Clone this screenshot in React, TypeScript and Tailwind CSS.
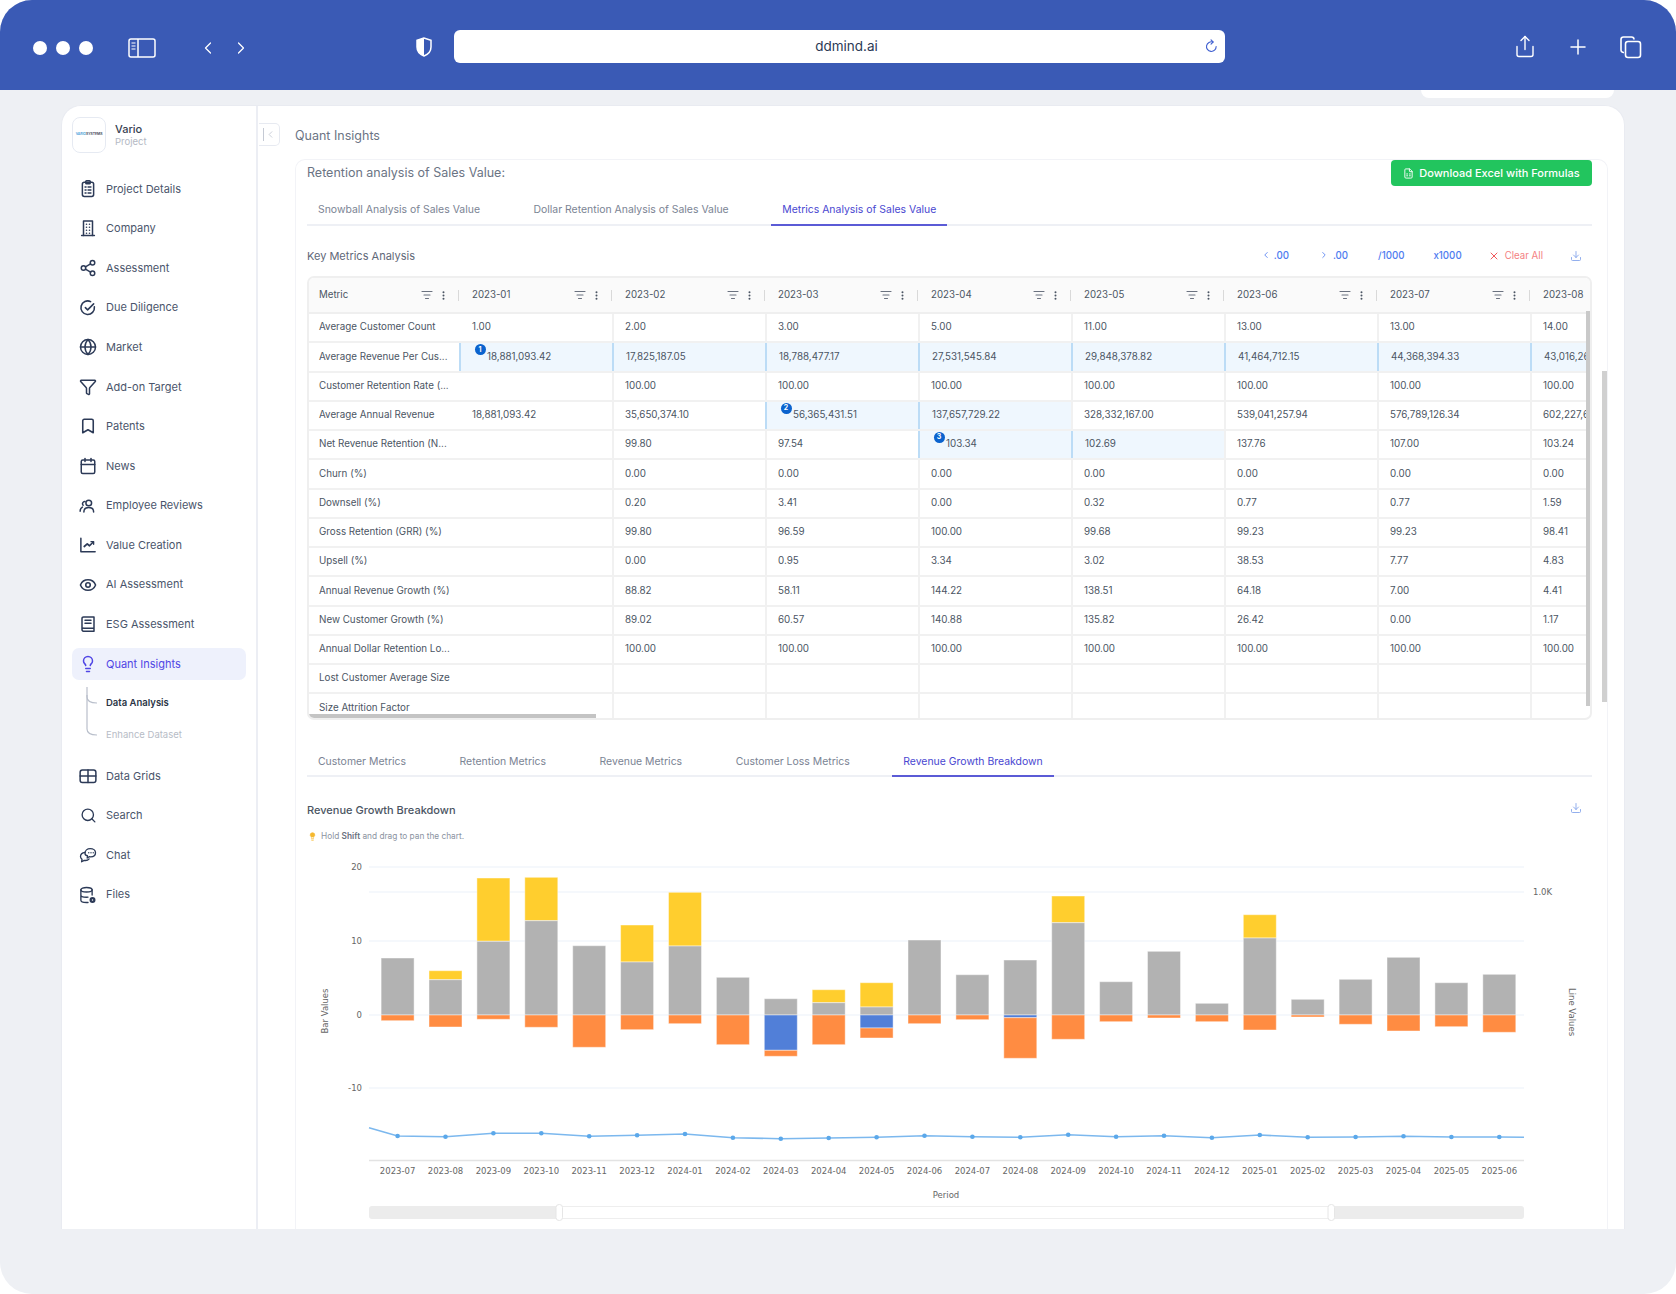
import React from 'react';
import {
  Bookmark,
  Calendar,
  ChevronLeft,
  ChevronRight,
  Download,
  EllipsisVertical,
  Eye,
  FileSpreadsheet,
  Funnel,
  Globe,
  Lightbulb,
  ListFilter,
  Plus,
  Search,
  Share,
  Share2,
  X,
} from 'lucide-react';

const ClipIcon = ({ className }: { className?: string }) => (
  <svg viewBox="0 0 24 24" fill="none" stroke="currentColor" strokeWidth="2" strokeLinecap="round" strokeLinejoin="round" className={className}>
    <rect x="4.500" y="3.500" width="15" height="19" rx="2.500" />
    <rect x="9" y="1.500" width="6" height="4" rx="1" />
    <path d="M8 10h1.500M12 10h4M8 14h1.500M12 14h4M8 18h1.500M12 18h4" strokeWidth="1.700" />
  </svg>
);

const CompanyIcon = ({ className }: { className?: string }) => (
  <svg viewBox="0 0 24 24" fill="none" stroke="currentColor" strokeWidth="2" strokeLinecap="round" strokeLinejoin="round" className={className}>
    <path d="M6 22V2.500h12V22" />
    <path d="M3.500 22h17" />
    <path d="M10 7h.01M14 7h.01M10 11h.01M14 11h.01M10 15h.01M14 15h.01M10 19h.01M14 19h.01" strokeWidth="2.200" />
  </svg>
);

const DueIcon = ({ className }: { className?: string }) => (
  <svg viewBox="0 0 24 24" fill="none" stroke="currentColor" strokeWidth="2.100" strokeLinecap="round" strokeLinejoin="round" className={className}>
    <path d="M20.500 10.500a9 9 0 1 1-5-7" />
    <path d="M8.500 11.500l3 3 8-8" />
  </svg>
);

const PeopleIcon = ({ className }: { className?: string }) => (
  <svg viewBox="0 0 24 24" fill="none" stroke="currentColor" strokeWidth="2" strokeLinecap="round" strokeLinejoin="round" className={className}>
    <circle cx="13" cy="8" r="3.800" />
    <path d="M6.500 20c0-3.800 2.800-6 6.500-6s6.500 2.200 6.500 6" />
    <path d="M8 6a3 3 0 0 0-2.500 5M4.500 13.500C2.800 14.500 1.500 16.500 1.500 19" />
  </svg>
);

const ValueIcon = ({ className }: { className?: string }) => (
  <svg viewBox="0 0 24 24" fill="none" stroke="currentColor" strokeWidth="2" strokeLinecap="round" strokeLinejoin="round" className={className}>
    <path d="M2.500 3v18h19" />
    <path d="M7 14l4-3.500 3 2.500 5-5" strokeWidth="2.300" />
    <path d="M16 7.500h3.500V11" strokeWidth="1.800" />
  </svg>
);

const BookIcon = ({ className }: { className?: string }) => (
  <svg viewBox="0 0 24 24" fill="none" stroke="currentColor" strokeWidth="2" strokeLinecap="round" strokeLinejoin="round" className={className}>
    <path d="M4 19V4.500A2 2 0 0 1 6 2.500h14v19H6a2 2 0 0 1-2-2.500 2 2 0 0 1 2-1.500h14" />
    <path d="M8 7h8M8 11h8" />
  </svg>
);

const GridsIcon = ({ className }: { className?: string }) => (
  <svg viewBox="0 0 24 24" fill="none" stroke="currentColor" strokeWidth="2" strokeLinecap="round" strokeLinejoin="round" className={className}>
    <rect x="1.500" y="4" width="21" height="16.500" rx="3" />
    <path d="M12 4v16.500M1.500 12h21" />
  </svg>
);

const ChatIcon = ({ className }: { className?: string }) => (
  <svg viewBox="0 0 24 24" fill="none" stroke="currentColor" strokeWidth="1.800" strokeLinecap="round" strokeLinejoin="round" className={className}>
    <path d="M8 9.500C8 6 11 3.500 15 3.500s7 2.500 7 5.500-2.500 5.500-6.500 5.500c-.8 0-1.500-.1-2-.2L11 16l.2-3C9 12.500 8 11 8 9.500z" />
    <path d="M8 8.500C4.500 9 2 11.500 2 14c0 1.500.8 2.800 2 3.700L3.500 21l3.500-1.800c2.500.5 5-.2 6.500-2" />
    <path d="M13 9h.01M16 9h.01M19 9h.01" />
  </svg>
);

const FilesIcon = ({ className }: { className?: string }) => (
  <svg viewBox="0 0 24 24" fill="none" stroke="currentColor" strokeWidth="1.800" strokeLinecap="round" strokeLinejoin="round" className={className}>
    <ellipse cx="10" cy="5" rx="7.500" ry="3" />
    <path d="M2.500 5v14c0 1.700 3.300 3 7.500 3h2M17.500 5v7M2.500 12c0 1.700 3.300 3 7.500 3 .7 0 1.300 0 2-.1" />
    <circle cx="18" cy="18.500" r="2.500" strokeWidth="3" />
  </svg>
);

const SidebarIcon = () => (
  <svg viewBox="0 0 28 20" className="w-[28px] h-[20px]" fill="none" stroke="white" strokeWidth="1.500">
    <rect x="1" y="1" width="26" height="18" rx="2" />
    <path d="M10 1v18" />
    <path d="M3.500 5h4M3.500 8h4M3.500 11h4" strokeWidth="1.200" />
  </svg>
);

const ShieldIcon = () => (
  <svg viewBox="0 0 16 20" className="w-[16px] h-[20px]">
    <path d="M8 1 1 3.200V10c0 4.500 3.200 7.500 7 9 3.800-1.500 7-4.500 7-9V3.200z" fill="none" stroke="white" strokeWidth="1.500" />
    <path d="M8 1 1 3.200V10c0 4.500 3.200 7.500 7 9z" fill="white" />
  </svg>
);

const ReloadIcon = () => (
  <svg viewBox="0 0 14 16" className="w-[13px] h-[15px]" fill="none" stroke="#3f5fd0" strokeWidth="1.200" strokeLinecap="round">
    <path d="M8.500 3.200A5.200 5.200 0 1 0 12 8" />
    <path d="M6.500 .8l2.300 2.300-2.300 2.300" />
  </svg>
);

const CopyIcon = () => (
  <svg viewBox="0 0 24 24" className="w-[24px] h-[24px]" fill="none" stroke="white" strokeWidth="1.600">
    <path d="M5 17.500A2.500 2.500 0 0 1 2 15V4.500A2.500 2.500 0 0 1 4.500 2h8A2.500 2.500 0 0 1 15 4.500" />
    <rect x="6.500" y="6.500" width="15" height="16" rx="2.500" />
  </svg>
);

const navTop = [
  { label: 'Project Details', icon: <ClipIcon className="w-[19px] h-[19px]" /> },
  { label: 'Company', icon: <CompanyIcon className="w-[18px] h-[18px]" /> },
  { label: 'Assessment', icon: <Share2 className="w-[18px] h-[18px]" strokeWidth={2} /> },
  { label: 'Due Diligence', icon: <DueIcon className="w-[18px] h-[18px]" /> },
  { label: 'Market', icon: <Globe className="w-[18px] h-[18px]" strokeWidth={2} /> },
  { label: 'Add-on Target', icon: <Funnel className="w-[18px] h-[18px]" strokeWidth={2} /> },
  { label: 'Patents', icon: <Bookmark className="w-[18px] h-[18px]" strokeWidth={2.1} /> },
  { label: 'News', icon: <Calendar className="w-[18px] h-[18px]" strokeWidth={2} /> },
  { label: 'Employee Reviews', icon: <PeopleIcon className="w-[18px] h-[18px]" /> },
  { label: 'Value Creation', icon: <ValueIcon className="w-[18px] h-[18px]" /> },
  { label: 'AI Assessment', icon: <Eye className="w-[18px] h-[18px]" strokeWidth={2.1} /> },
  { label: 'ESG Assessment', icon: <BookIcon className="w-[18px] h-[18px]" /> },
];

const navBottom = [
  { label: 'Data Grids', icon: <GridsIcon className="w-[18px] h-[18px]" /> },
  { label: 'Search', icon: <Search className="w-[17px] h-[17px]" strokeWidth={1.9} /> },
  { label: 'Chat', icon: <ChatIcon className="w-[18px] h-[18px]" /> },
  { label: 'Files', icon: <FilesIcon className="w-[18px] h-[18px]" /> },
];

const months = ['2023-01', '2023-02', '2023-03', '2023-04', '2023-05', '2023-06', '2023-07', '2023-08'];

const rows: { name: string; values: string[]; hl?: number[]; badge?: [number, number] }[] = [
  { name: 'Average Customer Count', values: ['1.00', '2.00', '3.00', '5.00', '11.00', '13.00', '13.00', '14.00'] },
  { name: 'Average Revenue Per Cus...', values: ['18,881,093.42', '17,825,187.05', '18,788,477.17', '27,531,545.84', '29,848,378.82', '41,464,712.15', '44,368,394.33', '43,016,261.50'], hl: [0, 1, 2, 3, 4, 5, 6, 7], badge: [0, 1] },
  { name: 'Customer Retention Rate (...', values: ['', '100.00', '100.00', '100.00', '100.00', '100.00', '100.00', '100.00'] },
  { name: 'Average Annual Revenue', values: ['18,881,093.42', '35,650,374.10', '56,365,431.51', '137,657,729.22', '328,332,167.00', '539,041,257.94', '576,789,126.34', '602,227,600.12'], hl: [2, 3], badge: [2, 2] },
  { name: 'Net Revenue Retention (N...', values: ['', '99.80', '97.54', '103.34', '102.69', '137.76', '107.00', '103.24'], hl: [3, 4], badge: [3, 3] },
  { name: 'Churn (%)', values: ['', '0.00', '0.00', '0.00', '0.00', '0.00', '0.00', '0.00'] },
  { name: 'Downsell (%)', values: ['', '0.20', '3.41', '0.00', '0.32', '0.77', '0.77', '1.59'] },
  { name: 'Gross Retention (GRR) (%)', values: ['', '99.80', '96.59', '100.00', '99.68', '99.23', '99.23', '98.41'] },
  { name: 'Upsell (%)', values: ['', '0.00', '0.95', '3.34', '3.02', '38.53', '7.77', '4.83'] },
  { name: 'Annual Revenue Growth (%)', values: ['', '88.82', '58.11', '144.22', '138.51', '64.18', '7.00', '4.41'] },
  { name: 'New Customer Growth (%)', values: ['', '89.02', '60.57', '140.88', '135.82', '26.42', '0.00', '1.17'] },
  { name: 'Annual Dollar Retention Lo...', values: ['', '100.00', '100.00', '100.00', '100.00', '100.00', '100.00', '100.00'] },
  { name: 'Lost Customer Average Size', values: ['', '', '', '', '', '', '', ''] },
  { name: 'Size Attrition Factor', values: ['', '', '', '', '', '', '', ''] },
];

// bar heights in px from the zero line: gray, yellow top, blue depth, orange depth
const bars = [
  { m: '2023-07', g: 57, y: 57, b: 0, o: 5.7 },
  { m: '2023-08', g: 35.3, y: 44.3, b: 0, o: 12 },
  { m: '2023-09', g: 73.7, y: 137, b: 0, o: 4.3 },
  { m: '2023-10', g: 94.3, y: 137.7, b: 0, o: 12.3 },
  { m: '2023-11', g: 69.3, y: 69.3, b: 0, o: 32.3 },
  { m: '2023-12', g: 53, y: 90, b: 0, o: 14.7 },
  { m: '2024-01', g: 69, y: 122.7, b: 0, o: 8.7 },
  { m: '2024-02', g: 37.7, y: 37.7, b: 0, o: 29.7 },
  { m: '2024-03', g: 16.3, y: 16.3, b: 35.3, o: 41.3 },
  { m: '2024-04', g: 12.3, y: 25.3, b: 0, o: 29.7 },
  { m: '2024-05', g: 8, y: 32.3, b: 13, o: 23 },
  { m: '2024-06', g: 75, y: 75, b: 0, o: 8.7 },
  { m: '2024-07', g: 40.3, y: 40.3, b: 0, o: 4.7 },
  { m: '2024-08', g: 55, y: 55, b: 2.7, o: 43.3 },
  { m: '2024-09', g: 92.3, y: 119, b: 0, o: 24.3 },
  { m: '2024-10', g: 33.3, y: 33.3, b: 0, o: 6.7 },
  { m: '2024-11', g: 63.7, y: 63.7, b: 0, o: 3 },
  { m: '2024-12', g: 11.7, y: 11.7, b: 0, o: 6.7 },
  { m: '2025-01', g: 77, y: 100.3, b: 0, o: 15 },
  { m: '2025-02', g: 15.7, y: 15.7, b: 0, o: 2 },
  { m: '2025-03', g: 35.7, y: 35.7, b: 0, o: 9.3 },
  { m: '2025-04', g: 57.7, y: 57.7, b: 0, o: 16 },
  { m: '2025-05', g: 32.3, y: 32.3, b: 0, o: 11.7 },
  { m: '2025-06', g: 40.7, y: 40.7, b: 0, o: 17.3 },
];

const lineY = [1135, 1135.7, 1132.3, 1132.3, 1135.3, 1134.3, 1133, 1136.7, 1137.7, 1137, 1136.3, 1134.7, 1135.7, 1136.3, 1133.7, 1135.7, 1134.7, 1136.7, 1134, 1136.3, 1136, 1135.3, 1136, 1136];

const barX = (i: number) => 397.6 + i * 47.9;

function Tabs({ items, active }: { items: string[]; active: string }) {
  return (
    <div className="flex gap-[31.500px] border-b-2 border-[#eef0f5]">
      {items.map((t) => (
        <div
          key={t}
          className={`-mb-[2px] px-[11px] pb-[5.500px] text-[10.450px] leading-[16px] border-b-2 ${t === active ? 'border-[#5b5bd6] text-[#4a47d1]' : 'border-transparent text-[#7b8494]'}`}
        >
          {t}
        </div>
      ))}
    </div>
  );
}

function Chart() {
  const pts = lineY.map((y, i) => `${barX(i)},${y}`).join(' ');
  return (
    <svg viewBox="307 850 1285 378" className="block w-[1285px] h-[378px]" fontFamily="'DejaVu Sans', sans-serif" fontSize="8.5" fill="#666">
      {[866, 891, 940, 1014, 1087].map((y) => (
        <line key={y} x1="369" x2="1524" y1={y} y2={y} stroke="#f2f6fb" strokeWidth="1.5" />
      ))}
      <text x="362" y="869" textAnchor="end">20</text>
      <text x="362" y="943" textAnchor="end">10</text>
      <text x="362" y="1017" textAnchor="end">0</text>
      <text x="362" y="1090" textAnchor="end">-10</text>
      <text x="1533" y="893.500">1.0K</text>
      <text transform="translate(328 1010) rotate(-90)" textAnchor="middle">Bar Values</text>
      <text transform="translate(1569 1011) rotate(90)" textAnchor="middle">Line Values</text>
      {bars.map((b, i) => {
        const x = barX(i) - 16.5;
        const z = 1014;
        return (
          <g key={b.m} stroke="#ffffff" strokeOpacity="0.45" strokeWidth="1">
            {b.y > b.g && <rect x={x} y={z - b.y} width="33" height={b.y - b.g} fill="#ffce2e" />}
            <rect x={x} y={z - b.g} width="33" height={b.g} fill="#b2b2b2" />
            {b.b > 0 && <rect x={x} y={z} width="33" height={b.b} fill="#517fd8" />}
            <rect x={x} y={z + b.b} width="33" height={b.o - b.b} fill="#ff8c42" />
          </g>
        );
      })}
      <line x1="369" x2="1524" y1="1159.500" y2="1159.500" stroke="#e3e3e3" strokeWidth="1.500" />
      <polyline points={`369,1126.700 ${pts} 1524,1136.300`} fill="none" stroke="#7cb8ee" strokeWidth="1.600" />
      {lineY.map((y, i) => (
        <circle key={i} cx={barX(i)} cy={y} r="2.300" fill="#5ba8ea" />
      ))}
      {bars.map((b, i) => (
        <text key={b.m} x={barX(i)} y="1173" textAnchor="middle">{b.m}</text>
      ))}
      <text x="946" y="1197" textAnchor="middle">Period</text>
      <rect x="369" y="1205" width="1155" height="13" rx="3" fill="#ececec" />
      <rect x="559" y="1205.500" width="772" height="12" fill="#ffffff" stroke="#eeeeee" />
      <rect x="556" y="1203.500" width="6.500" height="16" rx="3" fill="#ffffff" stroke="#e6e6e6" />
      <rect x="1328" y="1203.500" width="6.500" height="16" rx="3" fill="#ffffff" stroke="#e6e6e6" />
    </svg>
  );
}

export default function App() {
  return (
    <div className="w-[1676px] h-[1294px] bg-white font-['Inter',sans-serif]">
      <div className="relative w-full h-full rounded-[32px] overflow-hidden bg-[#eef0f4]">
        {/* browser bar */}
        <div className="h-[90px] bg-[#3a5ab5] flex items-center text-white relative">
          <div className="flex items-center gap-[9px] ml-[33px] mt-[6px]">
            <span className="w-[14px] h-[14px] rounded-full bg-white" />
            <span className="w-[14px] h-[14px] rounded-full bg-white" />
            <span className="w-[14px] h-[14px] rounded-full bg-white" />
          </div>
          <div className="ml-[35px] mt-[6px]"><SidebarIcon /></div>
          <ChevronLeft className="ml-[42px] w-[20px] h-[20px] mt-[6px]" strokeWidth={1.5} />
          <ChevronRight className="ml-[13px] w-[20px] h-[20px] mt-[6px]" strokeWidth={1.5} />
          <div className="ml-[165px] mt-[4px]"><ShieldIcon /></div>
          <div className="ml-[22px] mt-[2px] w-[771px] h-[33px] bg-white rounded-[6px] flex items-center justify-center relative">
            <span className="pl-[14px] text-[13.500px] text-[#2b3a55]">ddmind.ai</span>
            <div className="absolute right-[7px] top-[9px]"><ReloadIcon /></div>
          </div>
          <Share className="ml-[288px] w-[24px] h-[27px] mt-[2.500px]" strokeWidth={1.4} />
          <Plus className="ml-[29px] w-[24px] h-[24px] mt-[4.500px]" strokeWidth={1.5} />
          <div className="ml-[29px] mt-[4.500px]"><CopyIcon /></div>
        </div>

        {/* sliver of a popup behind the bar */}
        <div className="absolute left-[1421px] top-[90px] w-[193px] h-[8px] bg-white rounded-b-[8px]" />

        <div className="mt-[15px] ml-[61px] mr-[51px] h-[1124px] flex bg-white rounded-t-[20px] border border-b-0 border-[#e9ebf1] overflow-hidden">
          {/* sidebar */}
          <aside className="w-[196px] shrink-0 border-r-2 border-[#eceef4] pl-[10px] pr-[9px] pt-[11px]">
            <div className="flex items-center h-[36px]">
              <div className="w-[34px] h-[36px] rounded-[8px] border border-[#e6eaf2] flex items-center justify-center overflow-hidden">
                <span className="text-[3.500px] font-semibold tracking-tight whitespace-nowrap"><span className="text-[#3f9bd8]">VARIO</span><span className="text-[#374151]">SYSTEMS</span></span>
              </div>
              <div className="ml-[9px]">
                <div className="text-[11px] leading-[14px] font-medium text-[#374151]">Vario</div>
                <div className="text-[9.500px] leading-[12px] text-[#b4b9c4]">Project</div>
              </div>
            </div>
            <div className="mt-[16px]">
              {navTop.map((n) => (
                <div key={n.label} className="h-[39.600px] flex items-center text-[#2c3a57]">
                  <span className="w-[18px] flex justify-center ml-[7px]">{n.icon}</span>
                  <span className="ml-[9px] text-[11px] text-[#4a556b]">{n.label}</span>
                </div>
              ))}
              <div className="h-[39.600px] flex items-center">
                <div className="w-[174px] h-[32px] rounded-[7px] bg-[#eef1fc] flex items-center text-[#5046e5]">
                  <span className="w-[18px] flex justify-center ml-[7px]"><Lightbulb className="w-[18px] h-[18px]" strokeWidth={2} /></span>
                  <span className="ml-[9px] text-[11px] text-[#5046e5]">Quant Insights</span>
                </div>
              </div>
              <div className="relative h-[72.400px] pt-[3.200px]">
                <svg className="absolute left-[14px] top-[3px] w-[14px] h-[50px]" viewBox="0 0 14 50" fill="none" stroke="#b9bfcb" strokeWidth="1.200">
                  <path d="M1 0v10c0 4 3 6 10 6" />
                  <path d="M1 8v34c0 4 3 6 10 6" />
                </svg>
                <div className="h-[32px] flex items-center pl-[34px] text-[9.500px] font-semibold text-[#2b3546]">Data Analysis</div>
                <div className="h-[32px] flex items-center pl-[34px] text-[9.500px] text-[#b7bcc6]">Enhance Dataset</div>
              </div>
              {navBottom.map((n) => (
                <div key={n.label} className="h-[39.600px] flex items-center text-[#2c3a57]">
                  <span className="w-[18px] flex justify-center ml-[7px]">{n.icon}</span>
                  <span className="ml-[9px] text-[11px] text-[#4a556b]">{n.label}</span>
                </div>
              ))}
            </div>
          </aside>

          {/* main */}
          <main className="flex-1 min-w-0">
            <div className="flex items-center h-[23px] mt-[17px]">
              <div className="ml-[1px] w-[21px] h-[23px] rounded-r-[5px] border border-l-0 border-[#e7eaf1] flex items-center justify-center gap-[1px] text-[#b9bfcb]">
                <span className="w-[1px] h-[13px] bg-[#c5cad4]" />
                <ChevronLeft className="w-[11px] h-[11px]" strokeWidth={1.6} />
              </div>
              <span className="ml-[15px] mt-[4px] text-[12.500px] text-[#6b7484]">Quant Insights</span>
            </div>
            <section className="relative mt-[13px] ml-[37px] mr-[16px] h-[1100px] border border-b-0 border-[#f2f3f7] rounded-t-[10px] pl-[11px] pr-[15px]">
              <div className="flex items-center justify-between h-[26px]">
                <span className="text-[12.500px] text-[#6b7484]">Retention analysis of Sales Value:</span>
                <div className="w-[201px] h-[26px] rounded-[4px] bg-[#22c55e] text-white flex items-center justify-center gap-[5px] text-[11px] font-medium">
                  <FileSpreadsheet className="w-[11px] h-[11px]" />
                  Download Excel with Formulas
                </div>
              </div>
              <div className="mt-[16px]">
                <Tabs items={['Snowball Analysis of Sales Value', 'Dollar Retention Analysis of Sales Value', 'Metrics Analysis of Sales Value']} active="Metrics Analysis of Sales Value" />
              </div>

              <div className="mt-[15px] h-[32px] flex items-center justify-between text-[9.700px]">
                <span className="text-[#5f6878] text-[11px]">Key Metrics Analysis</span>
                <div className="flex items-center font-medium text-[#4f7cf0]">
                  <ChevronLeft className="w-[10px] h-[10px] mb-[3px]" /><span className="ml-[3px]">.00</span>
                  <ChevronRight className="ml-[30px] w-[10px] h-[10px] mb-[3px]" /><span className="ml-[4px]">.00</span>
                  <span className="ml-[30px]">/1000</span>
                  <span className="ml-[29px]">x1000</span>
                  <X className="ml-[26px] w-[12px] h-[12px] text-[#f0585c]" strokeWidth={2} /><span className="ml-[5px] font-normal text-[#f47f82]">Clear All</span>
                  <Download className="ml-[27px] mr-[10px] w-[12px] h-[12px] text-[#7fa1ea]" strokeWidth={1.7} />
                </div>
              </div>

              {/* table */}
              <div className="relative mt-[3.500px] w-[1285px] h-[444px] border-2 border-[#efefef] rounded-[7px] overflow-hidden text-[9.800px] text-[#4b5563]">
                <div className="flex h-[36px] border-b-2 border-[#efefef] bg-[#fafafa] text-[9.700px]">
                  {['Metric', ...months].map((m, i) => (
                    <div key={m} className={`shrink-0 flex items-center pr-[9px] ${i === 0 ? 'w-[150px] pl-[10px]' : 'w-[153px] pl-[13px]'}`}>
                      <span className="flex-1">{m}</span>
                      {m !== '2023-08' && (
                        <>
                          <ListFilter className="w-[12px] h-[12px] text-[#6b7280]" strokeWidth={2.2} />
                          <EllipsisVertical className="ml-[5px] w-[11px] h-[11px] text-[#4b5563]" strokeWidth={2.4} />
                          <span className="ml-[9px] -mr-[9px] w-[1px] h-[11px] bg-[#d9d9d9]" />
                        </>
                      )}
                    </div>
                  ))}
                </div>
                <div className="w-[1277px] overflow-hidden">
                  {rows.map((r) => (
                    <div key={r.name} className="flex w-[1375px] h-[29.250px] border-b-2 border-[#f1f1f1]">
                      <div className="w-[150px] shrink-0 pl-[10px] flex items-center whitespace-nowrap">{r.name}</div>
                      {r.values.map((v, c) => {
                        const hl = r.hl?.includes(c);
                        const badge = r.badge && r.badge[0] === c ? r.badge[1] : 0;
                        return (
                          <div
                            key={c}
                            className={`relative w-[153px] shrink-0 flex items-center whitespace-nowrap border-l-2 ${c === 0 && !hl ? 'border-transparent' : hl ? 'border-[#bcdcf6]' : 'border-[#f1f1f1]'} ${hl ? 'bg-[#eff7fe]' : ''} ${badge ? 'pl-[26px]' : hl ? 'pl-[12px]' : 'pl-[11px]'}`}
                          >
                            {badge > 0 && (
                              <span className="absolute left-[13.500px] top-[1px] w-[11px] h-[11px] rounded-full bg-[#0b63ce] text-white text-[7px] font-bold flex items-center justify-center">{badge}</span>
                            )}
                            {v}
                          </div>
                        );
                      })}
                    </div>
                  ))}
                </div>
                {/* scrollbars */}
                <div className="absolute right-0 top-[33px] w-[4px] h-[395px] bg-[#c9c9c9]" />
                <div className="absolute left-0 bottom-0 w-[287px] h-[4px] bg-[#c4c4c4]" />
              </div>
              <div className="absolute right-0 top-[211px] w-[5px] h-[331px] bg-[#d0d0d0]" />

              <div className="mt-[33.700px]">
                <Tabs items={['Customer Metrics', 'Retention Metrics', 'Revenue Metrics', 'Customer Loss Metrics', 'Revenue Growth Breakdown']} active="Revenue Growth Breakdown" />
              </div>

              <div className="mt-[25px] flex items-center justify-between h-[16px]">
                <span className="text-[11px] font-medium text-[#4b5563]">Revenue Growth Breakdown</span>
                <Download className="mr-[10px] -mt-[4px] w-[12px] h-[12px] text-[#7fa1ea]" strokeWidth={1.7} />
              </div>
              <div className="mt-[12.500px] h-[11px] flex items-center text-[8.300px] text-[#8b93a1]">
                <Lightbulb className="ml-[1px] mr-[4px] w-[9px] h-[9px] text-[#f5b82e] fill-[#f5b82e]" />
                <span>Hold <span className="font-semibold text-[#6b7280]">Shift</span> and drag to pan the chart.</span>
              </div>
              <div className="mt-[9px]"><Chart /></div>
            </section>
          </main>
        </div>
      </div>
    </div>
  );
}
